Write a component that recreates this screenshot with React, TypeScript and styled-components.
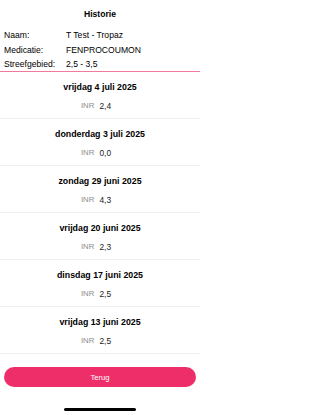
import React from 'react'
import styled, { createGlobalStyle } from 'styled-components'

const GlobalStyle = createGlobalStyle`
  *, *::before, *::after {
    box-sizing: border-box;
  }
  html, body {
    margin: 0;
    padding: 0;
    background: #fff;
  }
  body {
    font-family: 'Liberation Sans', Arial, sans-serif;
    color: #000;
    -webkit-font-smoothing: antialiased;
  }
`

const Screen = styled.div`
  width: 200px;
  height: 415px;
  display: flex;
  flex-direction: column;
  background: #fff;
  overflow: hidden;
`

const Title = styled.div`
  flex: none;
  height: 28px;
  display: flex;
  align-items: center;
  justify-content: center;
  font-size: 8.6px;
  font-weight: 700;
`

const InfoTable = styled.div`
  flex: none;
  display: grid;
  grid-template-columns: 62px 1fr;
  grid-template-rows: 14px 15px 14px;
  align-items: center;
  padding: 0 4px;
  font-size: 8.6px;
`

const InfoCell = styled.div`
  line-height: 12px;
  white-space: nowrap;
`

const AccentRule = styled.div`
  flex: none;
  height: 1px;
  background: #f07a9b;
`

const List = styled.div`
  flex: none;
  display: flex;
  flex-direction: column;
`

const Entry = styled.div`
  height: 47px;
  display: flex;
  flex-direction: column;
  align-items: center;
  padding-top: 9px;
  gap: 7px;
  border-bottom: 1px solid #efeff1;
`

const EntryDate = styled.div`
  height: 12px;
  font-size: 8.8px;
  font-weight: 700;
  line-height: 12px;
`

const Reading = styled.div`
  height: 12px;
  display: flex;
  align-items: center;
  gap: 5px;
  padding-right: 8px;
  line-height: 12px;
`

const ReadingLabel = styled.span`
  font-size: 7.8px;
  color: #8c8c8c;
`

const ReadingValue = styled.span`
  font-size: 8.4px;
  color: #1c1c1e;
`

const Footer = styled.div`
  flex: 1;
  display: flex;
  flex-direction: column;
  align-items: center;
  padding: 13px 4px 0;
`

const BackButton = styled.button`
  width: 100%;
  height: 20px;
  padding: 0;
  border: none;
  border-radius: 10px;
  background: #ee2e68;
  color: #fff;
  font-family: inherit;
  font-size: 7.6px;
  cursor: pointer;
`

const HomeIndicator = styled.div`
  margin-top: auto;
  margin-bottom: 4.5px;
  width: 72px;
  height: 2.5px;
  border-radius: 2px;
  background: #000;
`

const info = [
  ['Naam:', 'T Test - Tropaz'],
  ['Medicatie:', 'FENPROCOUMON'],
  ['Streefgebied:', '2,5 - 3,5'],
]

const entries = [
  { date: 'vrijdag 4 juli 2025', inr: '2,4' },
  { date: 'donderdag 3 juli 2025', inr: '0,0' },
  { date: 'zondag 29 juni 2025', inr: '4,3' },
  { date: 'vrijdag 20 juni 2025', inr: '2,3' },
  { date: 'dinsdag 17 juni 2025', inr: '2,5' },
  { date: 'vrijdag 13 juni 2025', inr: '2,5' },
]

export default function App() {
  return (
    <Screen>
      <GlobalStyle />
      <Title>Historie</Title>
      <InfoTable>
        {info.map(([label, value]) => (
          <React.Fragment key={label}>
            <InfoCell>{label}</InfoCell>
            <InfoCell>{value}</InfoCell>
          </React.Fragment>
        ))}
      </InfoTable>
      <AccentRule />
      <List>
        {entries.map((e) => (
          <Entry key={e.date}>
            <EntryDate>{e.date}</EntryDate>
            <Reading>
              <ReadingLabel>INR</ReadingLabel>
              <ReadingValue>{e.inr}</ReadingValue>
            </Reading>
          </Entry>
        ))}
      </List>
      <Footer>
        <BackButton>Terug</BackButton>
        <HomeIndicator />
      </Footer>
    </Screen>
  )
}
